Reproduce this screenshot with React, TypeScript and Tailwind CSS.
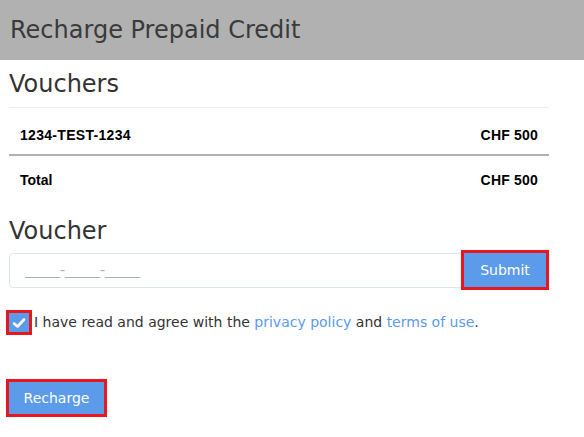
export default function App() {
  return (
    <div className="min-h-[437px] bg-white font-['DejaVu_Sans',sans-serif] text-[#333]">
      <div className="flex h-[60px] items-center bg-[#b1b1b1] px-[10px]">
        <h1 className="text-[24px] leading-none text-[#3a3a3a]">Recharge Prepaid Credit</h1>
      </div>

      <div className="ml-[9px] w-[540px]">
        <h2 className="pt-[12px] pb-[11px] text-[24px] leading-[24px]">Vouchers</h2>
        <table className="w-full border-collapse font-['Liberation_Sans',Arial,sans-serif] text-[14px] font-bold text-black">
          <tbody>
            <tr className="border-t border-[#eee]">
              <td className="pt-[17px] pb-[9px] pl-[11px] leading-[20px] tracking-[0.3px]">1234-TEST-1234</td>
              <td className="pt-[17px] pb-[9px] pr-[11px] text-right leading-[20px] tracking-[0.2px]">CHF 500</td>
            </tr>
            <tr className="border-t-2 border-[#b0b0b0]">
              <td className="pt-[14px] pb-[13px] pl-[11px] leading-[20px]">Total</td>
              <td className="pt-[14px] pb-[13px] pr-[11px] text-right leading-[20px] tracking-[0.2px]">CHF 500</td>
            </tr>
          </tbody>
        </table>

        <h2 className="pt-[13px] text-[24px] leading-[30px]">Voucher</h2>
        <div className="mt-[4px] flex items-center">
          <input
            className="h-[35px] flex-1 rounded-[4px] border border-[#dde5e5] px-[15px] text-[14px] placeholder:text-[#a8afc8] focus:outline-none"
            placeholder="_____-_____-_____"
          />
          <button className="-ml-[2px] h-[40px] w-[88px] shrink-0 border-[3px] border-[#e8161f] bg-[#5b9bea] text-[14px] text-white">
            Submit
          </button>
        </div>
      </div>

      <div className="mt-[20px] flex items-center pl-[6px] text-[14px]">
        <span className="flex h-[25px] w-[26px] items-center justify-center border-[3px] border-[#e8161f] bg-[#5b9bea]">
          <svg width="14" height="12" viewBox="0 0 14 12">
            <path d="M2 6.5 L5.5 9.5 L12 2.5" fill="none" stroke="white" strokeWidth="2.6" strokeLinecap="round" strokeLinejoin="round" />
          </svg>
        </span>
        <span className="ml-[2px]">
          I have read and agree with the <span className="text-[#5b9bea]">privacy policy</span> and{' '}
          <span className="text-[#5b9bea]">terms of use</span>.
        </span>
      </div>

      <div className="mt-[44px] pl-[6px]">
        <button className="h-[38px] w-[101px] border-[3px] border-[#e8161f] bg-[#5b9bea] text-[14px] text-white">
          Recharge
        </button>
      </div>
    </div>
  );
}
